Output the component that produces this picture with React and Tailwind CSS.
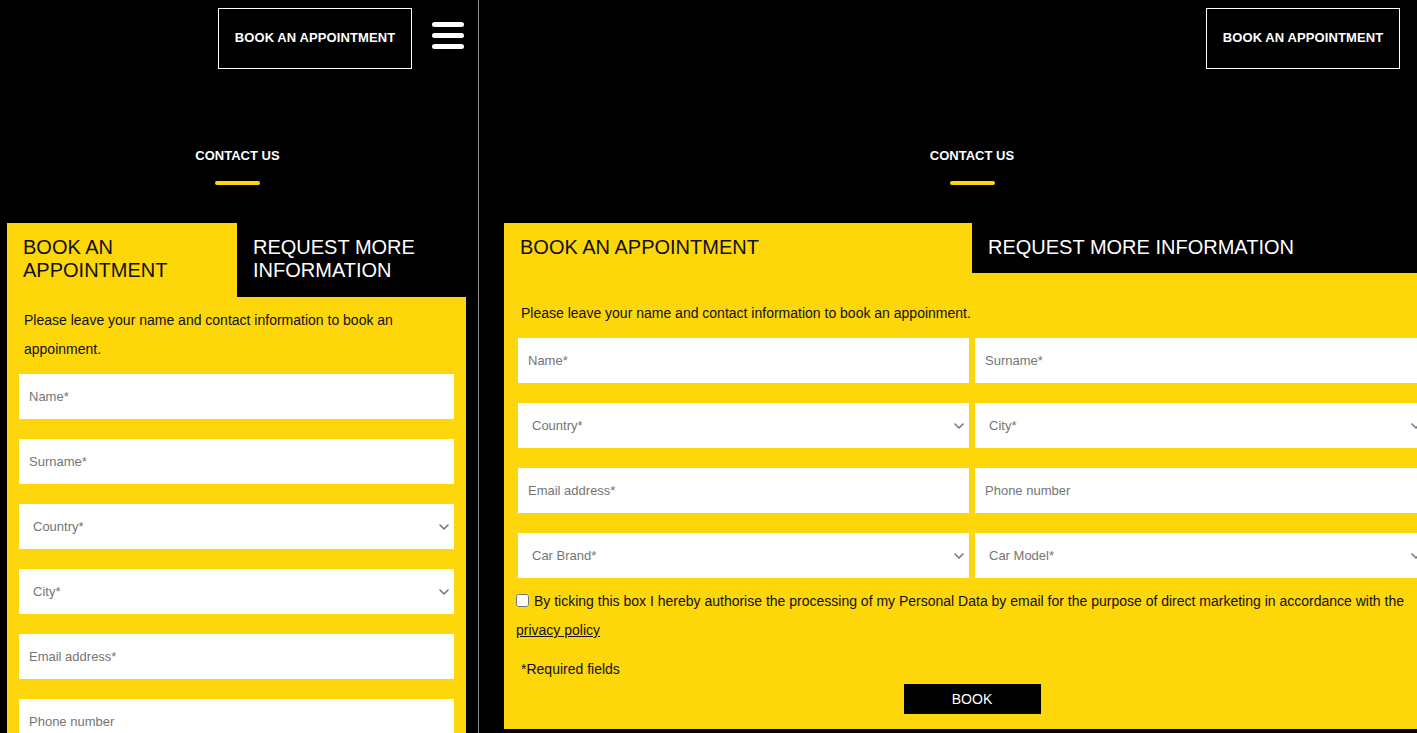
import React from "react";

const Y = "bg-[#fed70b]";

function Chevron() {
  return (
    <svg width="10" height="6" viewBox="0 0 10 6" className="shrink-0">
      <path d="M1 1 L5 5 L9 1" fill="none" stroke="#777" strokeWidth="1.6" strokeLinecap="round" strokeLinejoin="round" />
    </svg>
  );
}

function Field({ label }) {
  return (
    <input
      type="text"
      placeholder={label}
      className="block w-full h-[45px] bg-white px-[10px] text-[13px] text-black placeholder:text-[#757575] outline-none border-0"
    />
  );
}

function Select({ label }) {
  return (
    <div className="flex items-center justify-between w-full h-[45px] bg-white pl-[14px] pr-[5px] text-[13px] text-[#757575]">
      <span>{label}</span>
      <Chevron />
    </div>
  );
}

function BookButton() {
  return (
    <div className="flex items-center justify-center w-[194px] h-[61px] pb-[2px] border border-white text-white text-[13px] font-bold tracking-[0.1px]">
      BOOK AN APPOINTMENT
    </div>
  );
}

function ContactTitle() {
  return (
    <div className="flex flex-col items-center">
      <div className="text-white text-[13px] font-bold leading-[16px]">CONTACT US</div>
      <div className="mt-[17px] w-[45px] h-[4px] rounded-full bg-[#fed70b]" />
    </div>
  );
}

export default function App() {
  return (
    <div
      className="flex w-[1417px] h-[733px] overflow-hidden bg-black"
      style={{ fontFamily: '"Liberation Sans", Arial, sans-serif' }}
    >
      {/* Mobile panel */}
      <div className="w-[478px] shrink-0 h-full overflow-hidden">
        <div className="flex items-start justify-end gap-[20px] pt-[8px] pr-[14px]">
          <BookButton />
          <div className="mt-[14px] flex flex-col gap-[6px] w-[32px]">
            <div className="h-[5px] rounded-full bg-white" />
            <div className="h-[5px] rounded-full bg-white" />
            <div className="h-[5px] rounded-full bg-white" />
          </div>
        </div>
        <div className="mt-[79px] ml-[-3px]">
          <ContactTitle />
        </div>
        <div className="mt-[38px] ml-[7px] w-[459px]">
          <div className="grid grid-cols-[230px_229px]">
            <div className={`${Y} h-[74px] pl-[16px] pt-[13px] text-[20px] leading-[23px] text-[#111]`}>
              BOOK AN
              <br />
              APPOINTMENT
            </div>
            <div className="h-[74px] pl-[16px] pt-[13px] text-[20px] leading-[23px] text-white">
              REQUEST MORE
              <br />
              INFORMATION
            </div>
          </div>
          <div className={`${Y} px-[12px] pt-[9px] pb-[40px]`}>
            <p className="pl-[5px] text-[14px] leading-[29px] text-[#111]">
              Please leave your name and contact information to book an appoinment.
            </p>
            <div className="mt-[10px] flex flex-col gap-[20px]">
              <Field label="Name*" />
              <Field label="Surname*" />
              <Select label="Country*" />
              <Select label="City*" />
              <Field label="Email address*" />
              <Field label="Phone number" />
            </div>
          </div>
        </div>
      </div>

      {/* Divider */}
      <div className="w-px shrink-0 h-full bg-[#8a8a8a]" />

      {/* Desktop panel */}
      <div className="flex-1 h-full overflow-hidden">
        <div className="flex justify-end pt-[8px] pr-[17px]">
          <BookButton />
        </div>
        <div className="ml-[25px] w-[936px]">
          <div className="mt-[79px]">
            <ContactTitle />
          </div>
          <div className="mt-[38px] grid grid-cols-2">
            <div className={`${Y} h-[50px] pl-[16px] pt-[13px] text-[20px] leading-[23px] text-[#111]`}>
              BOOK AN APPOINTMENT
            </div>
            <div className="h-[50px] pl-[16px] pt-[13px] text-[20px] leading-[23px] text-white">
              REQUEST MORE INFORMATION
            </div>
          </div>
          <div className={`${Y} px-[14px] pt-[26px] pb-[15px]`}>
            <p className="pl-[3px] text-[14px] leading-[29px] text-[#111]">
              Please leave your name and contact information to book an appoinment.
            </p>
            <div className="mt-[10px] grid grid-cols-2 gap-x-[6px] gap-y-[20px]">
              <Field label="Name*" />
              <Field label="Surname*" />
              <Select label="Country*" />
              <Select label="City*" />
              <Field label="Email address*" />
              <Field label="Phone number" />
              <Select label="Car Brand*" />
              <Select label="Car Model*" />
            </div>
            <div className="mt-[9px] ml-[-2px] text-[14px] leading-[29px] text-[#111]">
              <label className="inline">
                <input type="checkbox" className="w-[13px] h-[13px] mr-[5px] align-[-1px]" />
                By ticking this box I hereby authorise the processing of my Personal Data by email for the purpose of direct marketing in accordance with the
              </label>
              <br />
              <a className="underline">privacy policy</a>
            </div>
            <div className="mt-[10px] pl-[3px] text-[14px] leading-[29px] text-[#111]">*Required fields</div>
            <div className="flex justify-center">
              <div className="flex items-center justify-center w-[137px] h-[30px] bg-black text-white text-[14px]">
                BOOK
              </div>
            </div>
          </div>
        </div>
      </div>
    </div>
  );
}
